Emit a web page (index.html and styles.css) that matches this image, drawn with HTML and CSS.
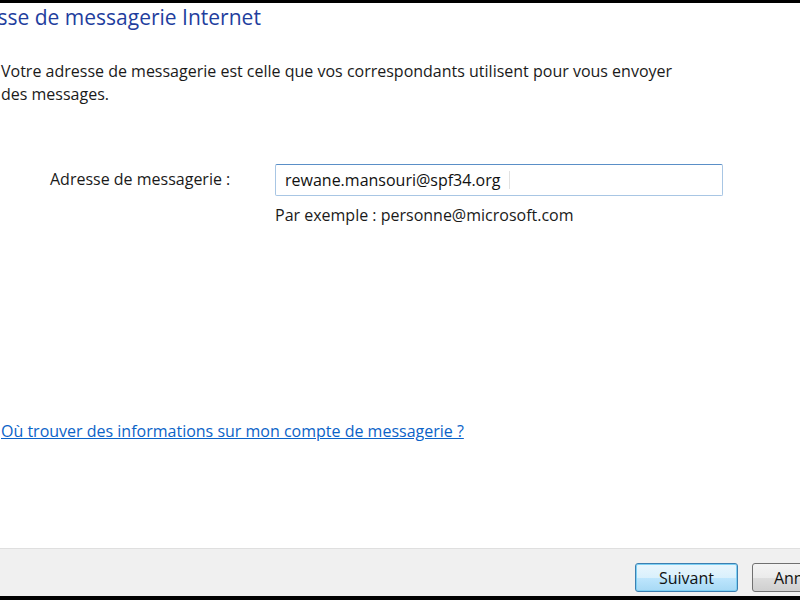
FILE: index.html
```html
<!DOCTYPE html>
<html lang="fr">
<head>
<meta charset="utf-8">
<title>Adresse de messagerie Internet</title>
<link rel="stylesheet" href="styles.css">
</head>
<body>
<div class="frame">
  <main class="content">
    <h1 class="title">Adresse de messagerie Internet</h1>
    <p class="desc">Votre adresse de messagerie est celle que vos correspondants utilisent pour vous envoyer<br>des messages.</p>
    <div class="form-row">
      <label class="label">Adresse de messagerie :</label>
      <div class="field">
        <div class="textbox"><span class="value">rewane.mansouri@spf34.org</span><span class="ibeam"></span></div>
        <div class="hint">Par exemple : personne@microsoft.com</div>
      </div>
    </div>
    <a class="help-link" href="#">Où trouver des informations sur mon compte de messagerie ?</a>
  </main>
  <footer class="footer">
    <button class="btn btn-default">Suivant</button>
    <button class="btn">Annuler</button>
  </footer>
</div>
</body>
</html>
```

FILE: styles.css
```css
html, body {
  margin: 0;
  padding: 0;
  width: 800px;
  height: 600px;
  overflow: hidden;
  background: #000;
}

.frame {
  box-sizing: border-box;
  width: 800px;
  height: 600px;
  border-top: 3px solid #000;
  border-bottom: 4px solid #000;
  display: flex;
  flex-direction: column;
  background: #fff;
  font-family: "Open Sans", "Noto Sans", sans-serif;
  font-size: 16px;
  color: #1a1a1a;
  overflow: hidden;
}

.content {
  flex: 1;
  padding-left: 1px;
  display: flex;
  flex-direction: column;
}

.title {
  margin: 0 0 0 -50px;
  font-weight: 400;
  font-size: 21px;
  line-height: 28px;
  color: #1f3e9e;
  white-space: nowrap;
}

.desc {
  margin: 29px 0 0 0;
  line-height: 23px;
}

.form-row {
  display: flex;
  margin-top: 58px;
  padding-left: 49px;
}

.label {
  width: 225px;
  padding-top: 4px;
  line-height: 22px;
}

.field {
  display: flex;
  flex-direction: column;
}

.textbox {
  box-sizing: border-box;
  width: 448px;
  height: 32px;
  border: 1px solid #a8c6e4;
  border-top-color: #5a8fc7;
  border-radius: 2px;
  padding: 0 9px;
  display: flex;
  align-items: center;
  gap: 9px;
  color: #111;
}

.ibeam {
  width: 1px;
  height: 18px;
  background: #e2e2e2;
}

.hint {
  margin-top: 8px;
  line-height: 22px;
}

.help-link {
  margin-top: 194px;
  align-self: flex-start;
  color: #0b63c8;
  text-decoration: underline;
  line-height: 22px;
}

.footer {
  box-sizing: border-box;
  height: 48px;
  flex-shrink: 0;
  border-top: 1px solid #dfdfdf;
  background: #f0f0f0;
  display: flex;
  align-items: flex-start;
  gap: 14px;
  padding: 14px 0 0 635px;
}

.btn {
  flex-shrink: 0;
  box-sizing: border-box;
  width: 103px;
  height: 29px;
  border: 1px solid #707070;
  border-radius: 3px;
  background: linear-gradient(#f4f4f4 0%, #ebebeb 50%, #dddddd 51%, #cfcfcf 100%);
  font-family: "Open Sans", "Noto Sans", sans-serif;
  font-size: 16px;
  color: #111;
  padding: 0;
}

.btn-default {
  border-color: #3c7fb1;
  background: linear-gradient(#eaf6fd 0%, #d9f0fc 50%, #bee6fd 51%, #a7d9f5 100%);
  box-shadow: inset 0 0 0 1px #7dd0f4;
}
```
